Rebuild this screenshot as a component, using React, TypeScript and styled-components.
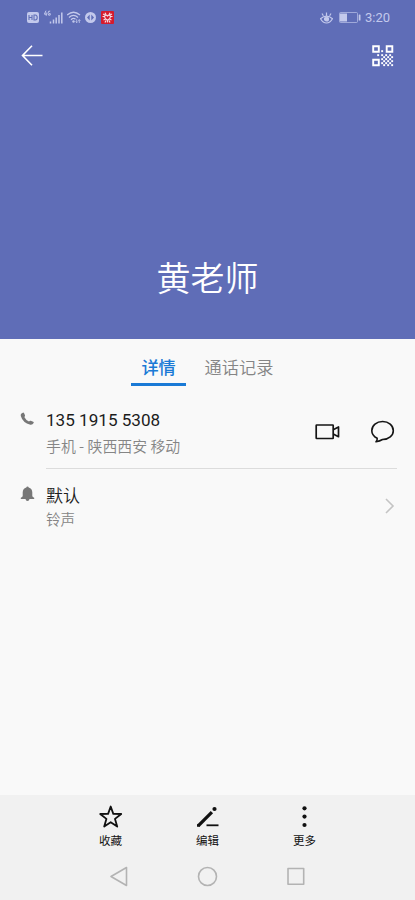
import React from "react";
import styled, { createGlobalStyle } from "styled-components";

const GlobalStyle = createGlobalStyle`
  * { box-sizing: border-box; }
  body { margin: 0; font-family: Roboto, "Noto Sans CJK SC", sans-serif; }
  svg { display: block; flex: none; }
  button { border: 0; padding: 0; background: none; font: inherit; color: inherit; }
`;

const Screen = styled.div`
  width: 415px;
  height: 900px;
  display: flex;
  flex-direction: column;
  background: #f9f9f9;
  overflow: hidden;
`;

const Hero = styled.header`
  height: 339px;
  display: flex;
  flex-direction: column;
  background: #5f6db7;
  color: #fff;
`;

const StatusBar = styled.div`
  height: 35px;
  padding: 0 25px 0 27px;
  display: flex;
  align-items: center;
  justify-content: space-between;
  color: #c3c9ec;
`;

const StatusGroup = styled.div<{ $gap: number }>`
  display: flex;
  align-items: center;
  gap: ${(p) => p.$gap}px;
`;

const Clock = styled.span`
  font-size: 13px;
  line-height: 15px;
  margin-left: -2px;
`;

const AppBar = styled.div`
  height: 41px;
  padding: 0 21px;
  display: flex;
  align-items: center;
  justify-content: space-between;
`;

const ContactName = styled.h1`
  margin: auto 0 0;
  padding-bottom: 37px;
  font-size: 34px;
  line-height: 50px;
  font-weight: 350;
  font-family: "Noto Sans CJK SC", sans-serif;
  text-align: center;
`;

const Tabs = styled.nav`
  height: 47px;
  padding-left: 131px;
  display: flex;
  gap: 8px;
`;

const Tab = styled.button<{ $active?: boolean }>`
  height: 47px;
  padding: 15px 10.4px 0;
  display: flex;
  align-items: flex-start;
  font-size: 17.2px;
  line-height: 28px;
  font-weight: ${(p) => (p.$active ? 500 : 350)};
  color: ${(p) => (p.$active ? "#1a7ad6" : "#858585")};
  border-bottom: ${(p) => (p.$active ? "3px solid #1a7ad6" : "3px solid transparent")};
`;

const Row = styled.section<{ $height: number; $divided?: boolean }>`
  height: ${(p) => p.$height}px;
  margin: 0 18px 0 46px;
  display: flex;
  align-items: center;
  justify-content: space-between;
  border-bottom: ${(p) => (p.$divided ? "1px solid #dcdcdc" : "none")};
`;

const Leading = styled.div<{ $top: number }>`
  width: 26px;
  margin-left: -26px;
  padding-top: ${(p) => p.$top}px;
  align-self: flex-start;
`;

const Lines = styled.div<{ $top: number }>`
  flex: 1;
  padding-top: ${(p) => p.$top}px;
  align-self: flex-start;
`;

const Primary = styled.div<{ $cjk?: boolean }>`
  font-family: ${(p) => (p.$cjk ? '"Noto Sans CJK SC"' : "Roboto")}, sans-serif;
  font-weight: ${(p) => (p.$cjk ? 350 : 400)};
  font-size: ${(p) => (p.$cjk ? 17 : 17.1)}px;
  line-height: 26px;
  color: #1c1c1c;
`;

const Secondary = styled.div<{ $size: number; $lead: number }>`
  font-family: "Noto Sans CJK SC", sans-serif;
  font-size: ${(p) => p.$size}px;
  line-height: ${(p) => p.$lead}px;
  font-weight: 350;
  color: #858585;
`;

const Actions = styled.div`
  display: flex;
  gap: 31px;
  padding: 9px 2px 0 0;
`;

const Trailing = styled.div`
  padding: 0 1px 2px 0;
`;

const Footer = styled.footer`
  height: 105px;
  margin-top: auto;
  background: #f1f1f1;
  color: #111;
`;

const Toolbar = styled.div`
  height: 58px;
  display: grid;
  grid-template-columns: repeat(3, 97px);
  justify-content: center;
`;

const Tool = styled.button`
  display: flex;
  flex-direction: column;
  align-items: center;
  padding-top: 10px;
  font-size: 11.5px;
  line-height: 16px;
  gap: 4px;
`;

const SystemNav = styled.div`
  height: 47px;
  display: grid;
  grid-template-columns: repeat(3, 88.5px);
  justify-content: center;
  justify-items: center;
  padding-top: 13px;
`;

const StatusIcons = () => (
  <StatusGroup $gap={4}>
    <svg width="13" height="13" viewBox="0 0 13 13">
      <rect x="0" y="1" width="12" height="11" rx="2" fill="currentColor" />
      <path d="M2 4v5M5 4v5M2 6.5h3M7 4v5h1.200q2-0.200 2-2.500T8.200 4z" fill="none" stroke="#5f6db7" strokeWidth="1.100" />
    </svg>
    <svg width="19" height="15" viewBox="0 -1.500 19 15" fill="none" stroke="currentColor">
      <path d="M2 -.8L0.400 2.700h2.400M2.200 1v3.300M6.200-.4Q4 -1 4 1.800t2.200 1.800V2H5.200" strokeWidth="1" />
      <path d="M6.500 10v2M9.500 8V12M12.200 6V12M15 3.500V12M17.800 1V12" strokeWidth="1.500" />
    </svg>
    <svg width="14" height="13" viewBox="0 0 14 13" fill="none" stroke="currentColor" strokeWidth="1.300">
      <path d="M0 4Q6.500-1.600 13 4M2 6.400Q6.500 2.400 11 6.400M4 8.700Q6.500 6.400 8.500 8.200" />
      <circle cx="6.500" cy="10.500" r="1.200" fill="currentColor" stroke="none" />
      <path d="M9.700 8.200v3.500M8.600 10.500l1.100 1.200 1.100-1.200M12.300 12V8.600M11.200 9.800l1.100-1.200 1.100 1.200" strokeWidth="0.800" />
    </svg>
    <svg width="12" height="13" viewBox="0 0 12 13">
      <circle cx="5.500" cy="6.500" r="5.500" fill="currentColor" />
      <path d="M4.700 3.500v6L2 6.500zM6.300 3.500v6L9 6.500z" fill="#5f6db7" />
    </svg>
    <svg width="13" height="13" viewBox="0 0 13 13">
      <rect width="13" height="13" rx="1" fill="#d51b2d" />
      <path d="M2 3l2 1M1.500 5.500L4 5.700M4 1.800l1 2M11 3L9 4M11.500 5.500L9 5.700M9 1.800L8 4M3.500 5.500Q5 3 6.500 5Q8 3 9.500 5.500Q9.500 7.500 6.500 9.300Q3.500 7.500 3.500 5.500M2.500 9l2-1M10.500 9l-2-1M4 11.500l1-2M9 11.500l-1-2M6.500 9v2.500" fill="none" stroke="#f6d9e2" strokeWidth="1.200" />
    </svg>
  </StatusGroup>
);

const PowerIcons = () => (
  <StatusGroup $gap={6}>
    <svg width="13" height="12" viewBox="0 0 13 12" fill="none" stroke="currentColor" strokeWidth="1.200">
      <path d="M0.500 6.700Q6.500 1.500 12.500 6.700Q10 11 6.500 11T0.500 6.700zM6.500 0.500v3M2 1.500l1.400 2.200M11 1.500L9.600 3.700" />
      <circle cx="6.500" cy="7" r="2" fill="currentColor" />
    </svg>
    <svg width="22" height="11" viewBox="0 0 22 11">
      <rect x="0.500" y="0.500" width="18" height="10" rx="1" fill="none" stroke="currentColor" strokeOpacity=".65" />
      <rect x="1" y="1.500" width="7" height="8" fill="currentColor" />
      <rect x="19.700" y="2.500" width="1.800" height="6" rx=".6" fill="currentColor" />
    </svg>
    <Clock>3:20</Clock>
  </StatusGroup>
);

const BackIcon = () => (
  <svg width="23" height="22" viewBox="0 0 23 22" fill="none" stroke="#fff" strokeWidth="1.600">
    <path d="M11 0.700L1.500 10.500l9.500 9.800M1.500 10.500H21.500" />
  </svg>
);

// Module positions of the dotted quarter of the QR glyph.
const qrDots = [
  [10, 6], [6, 10], [10, 10], [14, 10], [18, 10],
  [12, 12], [16, 12], [20, 12], [10, 14], [14, 14], [18, 14],
  [12, 16], [16, 16], [20, 16], [10, 18], [14, 18], [18, 18],
  [12, 20], [16, 20], [20, 20],
];

const QrIcon = () => (
  <svg width="22" height="22" viewBox="0 0 22 22">
    <path d="M1.200 1.200h5.600v5.600H1.200zM14.700 1.200h5.600v5.600h-5.600zM1.200 14.700h5.600v5.600H1.200z" fill="none" stroke="#fff" strokeWidth="1.900" />
    {qrDots.map(([x, y]) => (
      <rect key={`${x}-${y}`} x={x - 0.8} y={y - 0.8} width="1.900" height="1.900" fill="#fff" />
    ))}
  </svg>
);

const PhoneIcon = () => (
  <svg width="15" height="14" viewBox="0 0 15 14">
    <path d="M1.200 1.800L2.800.7Q3.600.3 4.100 1.300L5 3.300Q5.300 4.200 4.300 5Q5.700 8 9 9.500Q9.700 8.400 10.800 8.700L13.200 9.700Q14.200 10.200 13.600 11.100Q12.600 13 10.400 12.700Q2.700 10.800.8 4Q.5 2.500 1.200 1.800z" fill="#777" />
  </svg>
);

const BellIcon = () => (
  <svg width="15" height="16" viewBox="0 0 15 16" fill="#777">
    <path d="M7.500.5q1 0 1.200 1Q12.300 2.600 12.300 6.500V10q.2 1.200 1.900 1.800V13H.8v-1.200Q2.500 11.200 2.700 10V6.500Q2.700 2.600 6.300 1.500q.2-1 1.200-1zM5.500 13h4q-.3 2-2 2T5.500 13z" />
  </svg>
);

const VideoIcon = () => (
  <svg width="25" height="24" viewBox="0 0 25 24" fill="none" stroke="#151515" strokeWidth="1.700" strokeLinejoin="round">
    <rect x="1.200" y="5" width="17" height="13.500" rx=".5" />
    <path d="M18.200 9.800L23.500 7v9.700l-5.300-2.700" />
  </svg>
);

const ChatIcon = () => (
  <svg width="24" height="24" viewBox="0 0 24 24" fill="none" stroke="#151515" strokeWidth="1.600" strokeLinejoin="round">
    <path d="M6.200 18.300C3 16.600 .8 14 .8 10.700C.8 5.600 5.600 1.500 11.600 1.500S22.300 5.600 22.300 10.700C22.300 15.400 17.800 19.500 11.500 19.500Q8.800 21 5 21.800Q6.400 20.200 6.200 18.300z" />
  </svg>
);

const ChevronIcon = () => (
  <svg width="12" height="18" viewBox="0 0 12 18" fill="none" stroke="#c4c4c4" strokeWidth="1.600">
    <path d="M2 2l7 7-7 7" />
  </svg>
);

const StarIcon = () => (
  <svg width="24" height="24" viewBox="0 0 24 24" fill="none" stroke="currentColor" strokeWidth="1.800" strokeLinejoin="round">
    <path d="M11.700 1.500l2.600 7.400 7.900.1-6.200 4.900 2.200 7.700-6.500-4.400-6.500 4.400 2.200-7.700L1.200 9l7.900-.1z" />
  </svg>
);

const EditIcon = () => (
  <svg width="24" height="24" viewBox="0 0 24 24" stroke="currentColor" fill="none">
    <path d="M2.200 20.800L15.900 7.100" strokeWidth="3.300" />
    <path d="M1 18.800v3h3" fill="currentColor" stroke="none" />
    <circle cx="18.500" cy="4" r="2.100" fill="currentColor" stroke="none" />
    <path d="M10.500 20.300h12" strokeWidth="1.800" />
  </svg>
);

const MoreIcon = () => (
  <svg width="24" height="24" viewBox="0 0 24 24" fill="currentColor">
    <circle cx="11.500" cy="3.300" r="2.100" />
    <circle cx="11.500" cy="11.600" r="2.100" />
    <circle cx="11.500" cy="20" r="2.100" />
  </svg>
);

const NavGlyph = ({ d }: { d: string }) => (
  <svg width="21" height="21" viewBox="0 0 21 21" fill="none" stroke="#b3b3b3" strokeWidth="1.600" strokeLinejoin="round">
    <path d={d} />
  </svg>
);

export default function App() {
  return (
    <Screen>
      <GlobalStyle />
      <Hero>
        <StatusBar>
          <StatusIcons />
          <PowerIcons />
        </StatusBar>
        <AppBar>
          <BackIcon />
          <QrIcon />
        </AppBar>
        <ContactName>黄老师</ContactName>
      </Hero>
      <Tabs>
        <Tab $active>详情</Tab>
        <Tab>通话记录</Tab>
      </Tabs>
      <Row $height={83} $divided>
        <Leading $top={26}>
          <PhoneIcon />
        </Leading>
        <Lines $top={21}>
          <Primary>135 1915 5308</Primary>
          <Secondary $size={14.9} $lead={26}>手机 - 陕西西安 移动</Secondary>
        </Lines>
        <Actions>
          <VideoIcon />
          <ChatIcon />
        </Actions>
      </Row>
      <Row $height={75}>
        <Leading $top={17}>
          <BellIcon />
        </Leading>
        <Lines $top={13}>
          <Primary $cjk>默认</Primary>
          <Secondary $size={14.5} $lead={22}>铃声</Secondary>
        </Lines>
        <Trailing>
          <ChevronIcon />
        </Trailing>
      </Row>
      <Footer>
        <Toolbar>
          <Tool><StarIcon />收藏</Tool>
          <Tool><EditIcon />编辑</Tool>
          <Tool><MoreIcon />更多</Tool>
        </Toolbar>
        <SystemNav>
          <NavGlyph d="M17.500 1.500v18L2 10.500z" />
          <NavGlyph d="M10.500 1.500a9 9 0 1 0 0 18a9 9 0 1 0 0-18z" />
          <NavGlyph d="M2 2.500h15.700v15.700h-15.700z" />
        </SystemNav>
      </Footer>
    </Screen>
  );
}
